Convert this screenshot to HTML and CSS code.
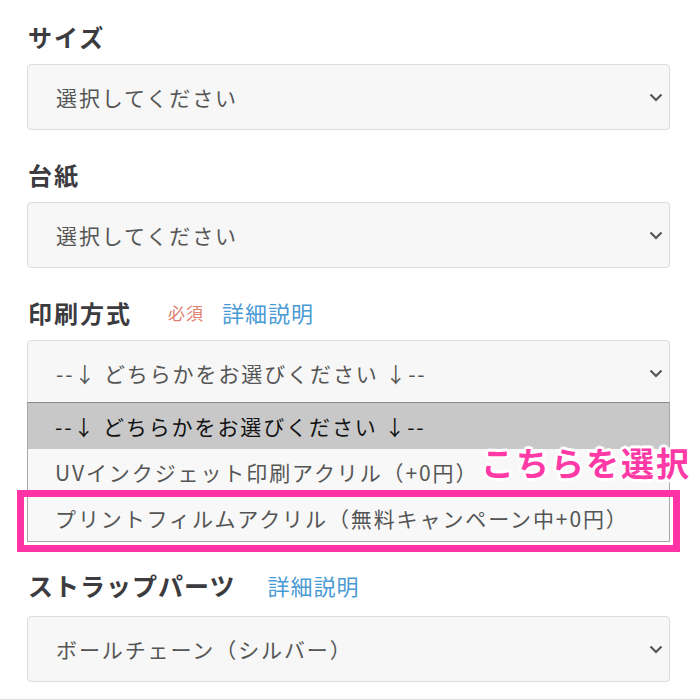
FILE: index.html
```html
<!DOCTYPE html>
<html lang="ja">
<head>
<meta charset="utf-8">
<link rel="stylesheet" href="styles.css">
</head>
<body>
<div class="form">
  <div class="field">
    <div class="field-label"><span class="label-text">サイズ</span></div>
    <div class="select"><span class="select-value">選択してください</span><svg class="chevron" width="14" height="9" viewBox="0 0 14 9"><path d="M1.5 1.5 L7 7 L12.5 1.5" fill="none" stroke="#555" stroke-width="2.2"/></svg></div>
  </div>
  <div class="field">
    <div class="field-label"><span class="label-text">台紙</span></div>
    <div class="select"><span class="select-value">選択してください</span><svg class="chevron" width="14" height="9" viewBox="0 0 14 9"><path d="M1.5 1.5 L7 7 L12.5 1.5" fill="none" stroke="#555" stroke-width="2.2"/></svg></div>
  </div>
  <div class="field field-open">
    <div class="field-label"><span class="label-text">印刷方式</span><span class="required">必須</span><span class="detail-link">詳細説明</span></div>
    <div class="select"><span class="select-value">--↓ どちらかをお選びください ↓--</span><svg class="chevron" width="14" height="9" viewBox="0 0 14 9"><path d="M1.5 1.5 L7 7 L12.5 1.5" fill="none" stroke="#555" stroke-width="2.2"/></svg></div>
    <div class="option-list">
      <div class="option option-active">--↓ どちらかをお選びください ↓--</div>
      <div class="option">UVインクジェット印刷アクリル（+0円）</div>
      <div class="option">プリントフィルムアクリル（無料キャンペーン中+0円）</div>
      <div class="highlight-box"></div>
      <div class="callout">こちらを選択</div>
    </div>
  </div>
  <div class="field field-strap">
    <div class="field-label"><span class="label-text label-large">ストラップパーツ</span><span class="detail-link detail-link-wide">詳細説明</span></div>
    <div class="select"><span class="select-value">ボールチェーン（シルバー）</span><svg class="chevron" width="14" height="9" viewBox="0 0 14 9"><path d="M1.5 1.5 L7 7 L12.5 1.5" fill="none" stroke="#555" stroke-width="2.2"/></svg></div>
  </div>
  <div class="bottom-rule"></div>
</div>
</body>
</html>
```

FILE: styles.css
```css
html, body {
  margin: 0;
  padding: 0;
  background: #ffffff;
}

body {
  font-family: "Noto Sans CJK JP", "Noto Sans", sans-serif;
  color: #555555;
  overflow: hidden;
}

.form {
  padding: 18px 30px 0 27px;
}

.field {
  margin-bottom: 26px;
}

.field-label {
  height: 36px;
  display: flex;
  align-items: center;
  margin-bottom: 10px;
}

.label-text {
  font-size: 24px;
  font-weight: 700;
  color: #3b3b40;
  letter-spacing: 2px;
  margin-left: 1px;
}

.label-large {
  font-size: 25px;
  letter-spacing: 1px;
}

.required {
  font-size: 17px;
  color: #e0806f;
  margin-left: 36px;
  letter-spacing: 1px;
}

.detail-link {
  font-size: 22px;
  color: #4a9ad4;
  margin-left: 18px;
  letter-spacing: 1px;
}

.detail-link-wide {
  margin-left: 32px;
}

.select {
  box-sizing: border-box;
  height: 66px;
  border: 1px solid #dcdcdc;
  border-radius: 4px;
  background: #f7f7f7;
  display: flex;
  align-items: center;
  justify-content: space-between;
  padding: 0 6px 0 28px;
}

.select-value {
  font-size: 21px;
  letter-spacing: 1.9px;
  color: #555555;
}

.chevron {
  display: block;
}

.field-open {
  margin-bottom: 25px;
}

.option-list {
  position: relative;
  margin-top: -4px;
  border: 1px solid #a8a8a8;
  border-top-color: #8a8a8a;
  background: #f8f8f8;
}

.option {
  height: 46px;
  display: flex;
  align-items: center;
  padding-left: 27px;
  font-size: 21px;
  letter-spacing: 1.9px;
  color: #555555;
}

.option-active {
  background: #c8c8c8;
  color: #111111;
}

.highlight-box {
  position: absolute;
  left: -11px;
  top: 87px;
  width: 649px;
  height: 48px;
  border: 7px solid #ff33a6;
}

.callout {
  position: absolute;
  left: 453px;
  top: 39px;
  font-size: 33px;
  line-height: 40px;
  font-weight: 700;
  letter-spacing: 2px;
  color: #ff3aa6;
  white-space: nowrap;
  text-shadow:
    3px 0 0 #fff, -3px 0 0 #fff, 0 3px 0 #fff, 0 -3px 0 #fff,
    2px 2px 0 #fff, -2px 2px 0 #fff, 2px -2px 0 #fff, -2px -2px 0 #fff;
}

.field-strap {
  margin-bottom: 0;
}

.field-strap .field-label {
  margin-bottom: 13px;
}

.bottom-rule {
  margin: 17px -30px 0 -27px;
  border-top: 1px solid #dddddd;
}
```
